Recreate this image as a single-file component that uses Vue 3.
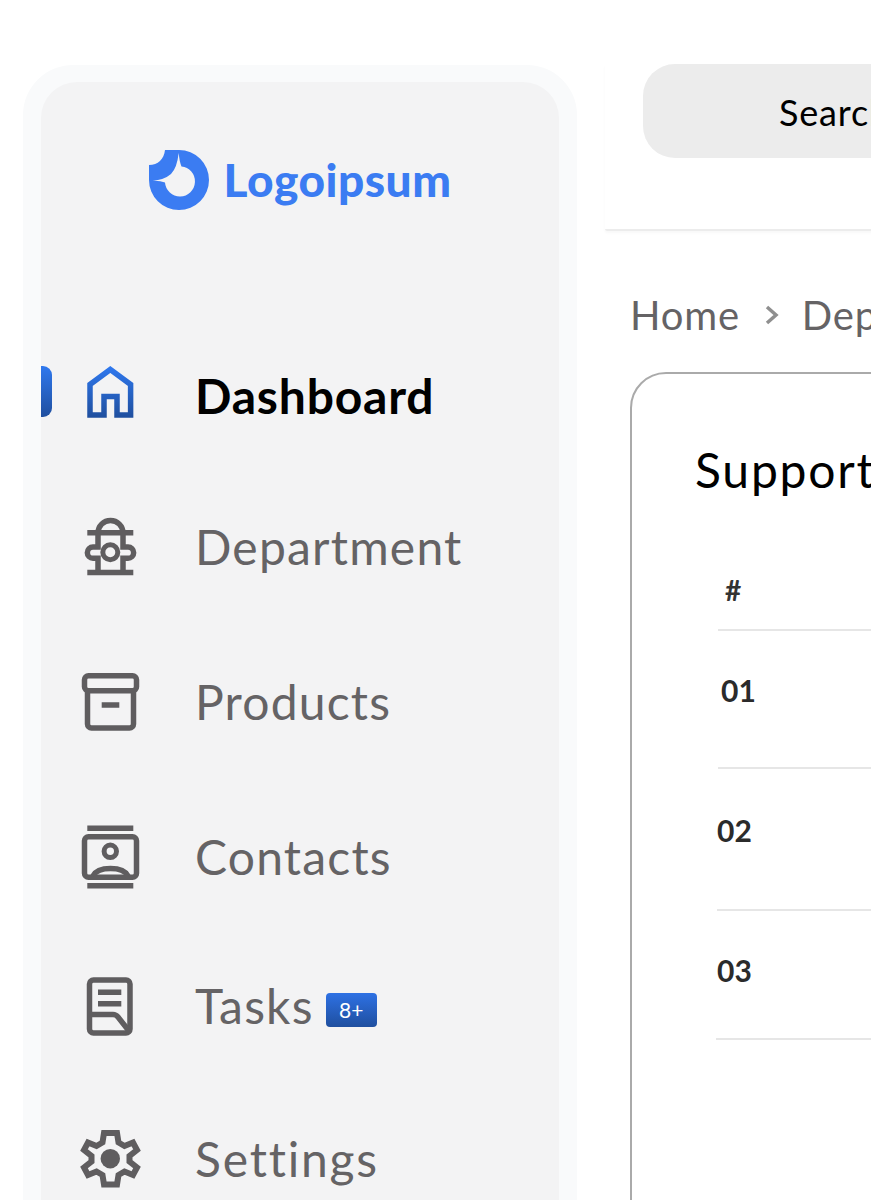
<script setup>
const rows = [
  { id: '01', cls: 'r1' },
  { id: '02', cls: 'r2' },
  { id: '03', cls: 'r3' },
]
</script>

<template>
  <div class="page">
    <aside class="side">
      <div class="inner">
        <div class="logo">
          <svg class="logo-mark" width="60" height="60" viewBox="149 150 60 60">
            <path fill="#3b7cf2" fill-rule="evenodd" d="M165 150H179A30 30 0 1 1 149 180V165C158 165 164 159 165 150ZM178.700 153Q179.500 162 181.500 166.500A15 15 0 1 1 165 182.500Q160 180.500 152.500 180.800Q164 180 171 174Q177 168 178.700 153Z"/>
          </svg>
          <span class="logo-text">Logoipsum</span>
        </div>
        <nav class="nav">
          <a class="item active">
            <span class="mark"></span>
            <svg class="icon" width="60" height="60" viewBox="0 0 60 60" fill="none">
              <defs>
                <linearGradient id="homeGrad" gradientUnits="userSpaceOnUse" x1="0" y1="0" x2="0" y2="50">
                  <stop offset="0" stop-color="#2f78ee"/>
                  <stop offset="1" stop-color="#1f4f9f"/>
                </linearGradient>
              </defs>
              <path stroke="url(#homeGrad)" stroke-width="5.500" d="M10 48V17.500L30.300 2.500L50.600 17.500V48H37V29.500H24V48Z"/>
            </svg>
            <span class="label">Dashboard</span>
          </a>
          <a class="item">
            <svg class="icon" width="60" height="60" viewBox="0 0 60 60" fill="none" stroke="#5f5d5f" stroke-width="5.500">
              <path d="M7.300 54.500H53.300M7.300 14.800H53.300M18 15A12.500 12.500 0 0 1 43 15"/>
              <path d="M18 15V29H13A5.650 5.650 0 0 0 13 40.300H18V54M43 15V29H48A5.650 5.650 0 0 1 48 40.300H43V54"/>
              <circle cx="30.300" cy="34.300" r="7.500" stroke-width="5"/>
            </svg>
            <span class="label">Department</span>
          </a>
          <a class="item">
            <svg class="icon" width="60" height="60" viewBox="0 0 60 60" fill="none" stroke="#5f5d5f" stroke-width="5.500">
              <rect x="4.500" y="2.750" width="52" height="15" rx="4"/>
              <path d="M7.500 18V51A4 4 0 0 0 11.500 55H49.500A4 4 0 0 0 53.500 51V18M21.700 32H39.300"/>
            </svg>
            <span class="label">Products</span>
          </a>
          <a class="item">
            <svg class="icon" width="60" height="60" viewBox="0 0 60 60" fill="none" stroke="#5f5d5f" stroke-width="5.500">
              <path d="M7.300 0.300H53.300M7.300 57.700H53.300"/>
              <rect x="4.500" y="8.750" width="52" height="40.500" rx="4"/>
              <circle cx="30.300" cy="23.300" r="6.200" stroke-width="5"/>
              <path d="M13 48C16 42 23 40.500 30.500 40.500S45 42 48 48"/>
            </svg>
            <span class="label">Contacts</span>
          </a>
          <a class="item">
            <svg class="icon" width="60" height="60" viewBox="0 0 60 60" fill="none" stroke="#5f5d5f" stroke-width="5.500">
              <rect x="9.500" y="3" width="40.500" height="53" rx="4"/>
              <path d="M18 15.200H41.300M18 26.700H41.300M9.500 37.500H33Q36 37.500 38 40L49 54"/>
            </svg>
            <span class="label">Tasks</span>
            <span class="badge">8+</span>
          </a>
          <a class="item">
            <svg class="icon" width="60" height="60" viewBox="0 0 60 60" fill="none">
              <path stroke="#5f5d5f" stroke-width="6" d="M24 3H37L38.500 12.500L44.500 16L53 12.500L57 20L49.500 26V31.500L57 37.500L53 45L44.500 41.500L38.500 45L37 54.500H24L22.500 45L16.500 41.500L8 45L4 37.500L11.500 31.500V26L4 20L8 12.500L16.500 16L22.500 12.500Z"/>
              <circle cx="30.300" cy="28.700" r="9.700" fill="#5f5d5f"/>
            </svg>
            <span class="label settings">Settings</span>
          </a>
        </nav>
      </div>
    </aside>

    <main class="main">
      <header class="top">
        <div class="search">Search</div>
      </header>
      <div class="crumbs">
        <span>Home</span>
        <svg class="chev" width="14" height="22" viewBox="0 0 14 22" fill="none">
          <path d="M2 3L11 11L2 19" stroke="#8f8f8f" stroke-width="3.500"/>
        </svg>
        <span>Department</span>
      </div>
      <section class="card">
        <h2 class="title">Support Department</h2>
        <div class="thead">#</div>
        <div v-for="r in rows" :key="r.id" class="row" :class="r.cls">
          <span class="num">{{ r.id }}</span>
        </div>
      </section>
    </main>
  </div>
</template>

<style>
html, body { margin: 0; background: #fff; overflow: hidden; }
</style>

<style scoped>
.page {
  width: 871px;
  height: 1200px;
  overflow: hidden;
  display: flex;
  align-items: flex-start;
  background: #fff;
  font-family: "Lato", "Noto Sans", sans-serif;
}
.side {
  flex: none;
  width: 518px;
  height: 1300px;
  margin: 65px 0 0 23px;
  padding: 17px 18px 0;
  background: #f9fafb;
  border-radius: 50px 50px 0 0;
}
.inner {
  height: 100%;
  background: #f3f3f4;
  border-radius: 36px 36px 0 0;
  padding-top: 68px;
  box-sizing: border-box;
}
.logo {
  display: flex;
  align-items: center;
  justify-content: center;
  gap: 15px;
  height: 60px;
}
.logo-mark { flex: none; }
.logo-text {
  font-size: 46px;
  font-weight: 900;
  color: #3b7cf2;
  letter-spacing: 0.5px;
  line-height: 60px;
}
.nav { margin-top: 157px; }
.item {
  position: relative;
  display: flex;
  align-items: center;
  height: 60px;
  padding-left: 39px;
}
.item:nth-child(2) { margin-top: 91px; }
.item:nth-child(3) { margin-top: 95px; }
.item:nth-child(4) { margin-top: 95px; }
.item:nth-child(5) { margin-top: 89px; }
.item:nth-child(6) { margin-top: 93px; }
.icon { flex: none; overflow: visible; margin-right: 56px; }
.label {
  font-size: 48px;
  letter-spacing: 1.2px;
  color: #656365;
  line-height: 60px;
  margin: -2px 0 0 -1px;
}
.settings { letter-spacing: 1.800px; }
.active .label { color: #000; font-weight: 700; letter-spacing: 0.8px; }
.mark {
  position: absolute;
  left: 0;
  top: -1px;
  width: 11px;
  height: 51px;
  border-radius: 0 9px 9px 0;
  background: linear-gradient(#2f78ee, #1f4f9f);
}
.badge {
  width: 51px;
  height: 34px;
  margin: 6px 0 0 12px;
  border-radius: 4px;
  background: linear-gradient(#2e71e4, #1f4f9f);
  color: #fff;
  font-size: 21px;
  line-height: 34px;
  text-align: center;
}
.main {
  flex: none;
  width: 900px;
  margin-left: 28px;
  padding-top: 64px;
}
.top {
  padding: 0 0 71px 38px;
  border-bottom: 2px solid #ececec;
  box-shadow: 0 2px 3px rgba(0, 0, 0, 0.03);
  border-radius: 2px;
}
.search {
  height: 94px;
  padding-left: 136px;
  border-radius: 32px;
  background: #ececec;
  color: #000;
  font-size: 36px;
  letter-spacing: 0.8px;
  line-height: 97px;
}
.crumbs {
  display: flex;
  align-items: center;
  gap: 25px;
  margin: 62px 0 0 25px;
  color: #656365;
  font-size: 40px;
  letter-spacing: 0.8px;
  line-height: 44px;
}
.chev { flex: none; margin-right: -2px; }
.card {
  margin: 35px 0 0 25px;
  height: 900px;
  border: 2px solid #aaa;
  border-radius: 36px;
  box-sizing: border-box;
  background: #fff;
}
.title {
  margin: 68px 0 0 63px;
  font-size: 48px;
  letter-spacing: 1.800px;
  line-height: 56px;
  font-weight: 400;
  color: #000;
}
.thead {
  margin: 74px 0 0 86px;
  padding: 0 0 21px 7px;
  font-size: 28px;
  line-height: 36px;
  font-weight: 700;
  color: #333;
  border-bottom: 2px solid #e6e6e6;
}
.row {
  box-sizing: border-box;
  border-bottom: 2px solid #e6e6e6;
  font-size: 30px;
  line-height: 36px;
  font-weight: 700;
  color: #2b2b2b;
}
.r1 { height: 138px; margin-left: 86px; padding: 41px 0 0 3px; }
.r2 { height: 142px; margin-left: 85px; padding: 43px 0 0 0; }
.r3 { height: 129px; margin-left: 84px; padding: 41px 0 0 1px; }
</style>
